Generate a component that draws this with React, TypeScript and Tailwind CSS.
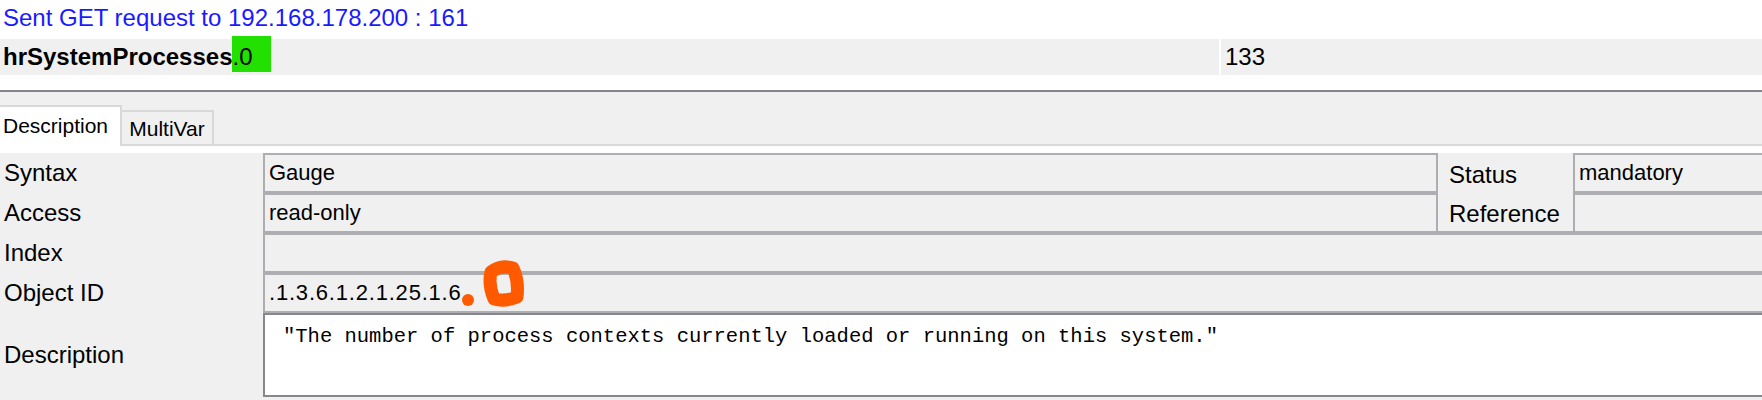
export default function App() {
  const field = 'border-2 border-[#adadb2] pl-[4px] text-[22px] leading-[36px]'
  const label = 'pl-[4px] text-[24px] leading-[40px]'

  return (
    <div className="w-[1762px] h-[400px] overflow-hidden bg-white font-['Liberation_Sans',Arial,sans-serif] text-black">
      <div className="h-[39px] pt-[4px] pl-[3px] text-[24px] leading-[28px] text-[#1a1aff]">
        Sent GET request to 192.168.178.200 : 161
      </div>

      <div className="flex h-[36px] bg-[#f0f0f0] text-[24px] leading-[36px]">
        <div className="flex w-[1219px] pl-[3px]">
          <span className="font-bold">hrSystemProcesses</span>
          <span className="w-[39px] -translate-y-[3px] bg-[#22e000]">
            <span className="inline-block translate-y-[3px]">.0</span>
          </span>
        </div>
        <div className="w-[2px] bg-white" />
        <div className="flex-1 pl-[4px]">133</div>
      </div>

      <div className="h-[15px]" />
      <div className="h-[2px] bg-[#84868c]" />

      <div className="h-[308px] bg-[#f0f0f0]">
        {/* tabs */}
        <div className="flex h-[54px] items-end text-[21px] leading-[24px]">
          <div className="h-[41px] w-[122px] border-r-2 border-t-2 border-[#d9d9d9] bg-white pl-[3px] pt-[7px]">
            Description
          </div>
          <div className="h-[36px] w-[92px] border-y-2 border-r-2 border-[#d9d9d9] pt-[5px] text-center">
            MultiVar
          </div>
          <div className="h-[2px] flex-1 bg-[#d9d9d9]" />
        </div>
        <div className="h-[7px] bg-white" />

        <div className="grid grid-cols-[263px_1175px_135px_189px] grid-rows-[40px_40px_40px_40px_84px]">
          <div className={label}>Syntax</div>
          <div className={field}>Gauge</div>
          <div className="row-span-2 border-b-2 border-[#adadb2] pl-[11px] text-[24px] leading-[40px]">
            <div className="h-[40px] pt-[2px]">Status</div>
            <div className="h-[38px] pt-[1px]">Reference</div>
          </div>
          <div className={`${field} border-r-0`}>mandatory</div>

          <div className={label}>Access</div>
          <div className={field}>read-only</div>
          <div className={`${field} border-r-0`} />

          <div className={label}>Index</div>
          <div className={`${field} col-span-3 border-r-0`} />

          <div className={label}>Object ID</div>
          <div className={`${field} relative col-span-3 border-r-0 tracking-[0.8px]`}>
            .1.3.6.1.2.1.25.1.6.
            <svg
              className="absolute left-[192px] top-[-18px] overflow-visible"
              width="75"
              height="55"
              viewBox="0 0 75 55"
            >
              <circle cx="11" cy="43" r="6" fill="#ff5a00" />
              <path
                d="M37 13 Q46 8 56 11 Q62 24 60 40 Q48 45 37 42 Q31 28 34 15 Z"
                fill="none"
                stroke="#ff5a00"
                strokeWidth="13"
                strokeLinejoin="round"
              />
            </svg>
          </div>

          <div className="pl-[4px] text-[24px] leading-[84px]">Description</div>
          <div className="col-span-3 whitespace-pre border-2 border-r-0 border-[#86878c] bg-white pl-[18px] pt-[10px] font-['Liberation_Mono','Courier_New',monospace] text-[20.5px] leading-[24px]">
            "The number of process contexts currently loaded or running on this system."
          </div>
        </div>
      </div>
    </div>
  )
}
